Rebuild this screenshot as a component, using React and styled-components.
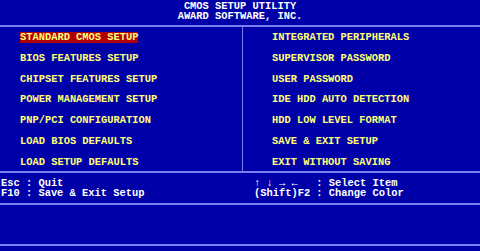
import styled, { createGlobalStyle } from "styled-components";

const GlobalStyle = createGlobalStyle`
    html, body {
        margin: 0;
        padding: 0;
        background: #0000a8;
        overflow: hidden;
    }
`;

const leftMenu = [
    "STANDARD CMOS SETUP",
    "BIOS FEATURES SETUP",
    "CHIPSET FEATURES SETUP",
    "POWER MANAGEMENT SETUP",
    "PNP/PCI CONFIGURATION",
    "LOAD BIOS DEFAULTS",
    "LOAD SETUP DEFAULTS",
];

const rightMenu = [
    "INTEGRATED PERIPHERALS",
    "SUPERVISOR PASSWORD",
    "USER PASSWORD",
    "IDE HDD AUTO DETECTION",
    "HDD LOW LEVEL FORMAT",
    "SAVE & EXIT SETUP",
    "EXIT WITHOUT SAVING",
];

const App = () => {
    return (
        <>
            <GlobalStyle />
            <Screen>
                <Header>
                    <div>CMOS SETUP UTILITY</div>
                    <div>AWARD SOFTWARE, INC.</div>
                </Header>
                <Rule />
                <Menu>
                    <MenuColumn>
                        {leftMenu.map((item, i) => (
                            <MenuItem key={item} $active={i === 0}>
                                {item}
                            </MenuItem>
                        ))}
                    </MenuColumn>
                    <MenuColumn $right>
                        {rightMenu.map((item) => (
                            <MenuItem key={item}>{item}</MenuItem>
                        ))}
                    </MenuColumn>
                </Menu>
                <Rule />
                <Help>
                    <HelpColumn>
                        <div>Esc : Quit</div>
                        <div>F10 : Save &amp; Exit Setup</div>
                    </HelpColumn>
                    <HelpColumn $right>
                        <div>{"↑ ↓ → ←   : Select Item"}</div>
                        <div>(Shift)F2 : Change Color</div>
                    </HelpColumn>
                </Help>
                <Rule />
                <Status />
                <Rule />
            </Screen>
        </>
    );
};

const Screen = styled.div`
    display: flex;
    flex-direction: column;
    width: 480px;
    height: 251px;
    background: #0000a8;
    font-family: "Liberation Mono", "DejaVu Sans Mono", monospace;
    font-weight: bold;
    font-size: 10.4px;
    white-space: pre;
`;

const Header = styled.div`
    display: flex;
    flex-direction: column;
    align-items: center;
    height: 25px;
    padding-top: 1px;
    box-sizing: border-box;
    line-height: 10px;
    color: #ffffff;
`;

const Rule = styled.div`
    height: 2px;
    flex: none;
    background: #7c7cf4;
`;

const Menu = styled.div`
    display: grid;
    grid-template-columns: 242px 1fr;
    height: 144px;
`;

const MenuColumn = styled.div`
    display: flex;
    flex-direction: column;
    align-items: flex-start;
    gap: 9.8px;
    padding-top: 5px;
    padding-left: ${(p) => (p.$right ? "29px" : "20px")};
    border-left: ${(p) => (p.$right ? "1px solid #7c7cf4" : "none")};
`;

const MenuItem = styled.div`
    line-height: 11px;
    height: 11px;
    color: #ffff78;
    background: ${(p) => (p.$active ? "#b00000" : "transparent")};
`;

const Help = styled.div`
    display: grid;
    grid-template-columns: 253px 1fr;
    height: 30px;
    padding-top: 5px;
    padding-left: 1px;
    box-sizing: border-box;
    line-height: 10px;
    color: #ffffff;
`;

const HelpColumn = styled.div`
    display: flex;
    flex-direction: column;
`;

const Status = styled.div`
    height: 39px;
`;

export default App;
